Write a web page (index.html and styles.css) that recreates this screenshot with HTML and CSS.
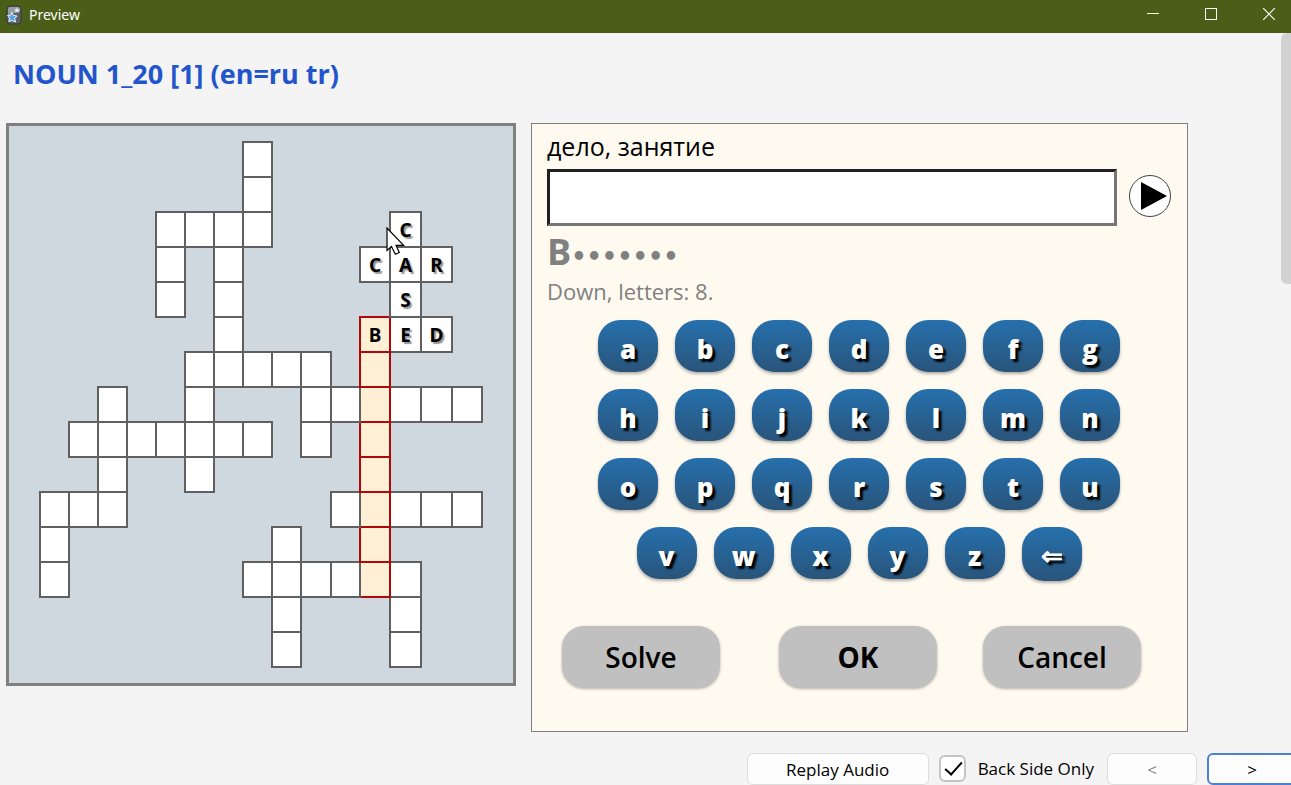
FILE: index.html
```html
<!DOCTYPE html>
<html lang="en">
<head>
    <meta charset="UTF-8">
    <meta name="viewport" content="width=device-width, initial-scale=1.0">
    <title>Preview</title>
    <link rel="stylesheet" href="styles.css">
</head>
<body>

<header class="titlebar">
    <svg class="app-icon" width="16" height="20" viewBox="0 0 16 20">
        <rect x="1" y="1" width="14" height="18" rx="3" fill="#5d6266" stroke="#33363a"/>
        <path d="M2 10 L14 6 V4 Q14 2 12 2 H4 Q2 2 2 4 Z" fill="#9a9ea2"/>
        <path d="M6 7.500 L7.600 10.500 L11 11 L8.800 13.500 L9.500 17 L6 15.500 L2.800 16.500 L3.500 13 L1.500 10.500 L4.800 10.200 Z" fill="#5ba7e6" stroke="#e6f2fc" stroke-width="1"/>
        <path d="M11 2.500 L12 4.500 L14 5 L12.500 6.500 L12.500 8 L11 7 L9 7.500 L9.500 5.500 L8.500 4 L10.300 4 Z" fill="#dfe8f0"/>
    </svg>
    <span class="window-title">Preview</span>
    <div class="window-buttons">
        <button type="button" aria-label="Minimize">
            <svg width="12" height="12" viewBox="0 0 12 12"><path d="M0 5.500 H12" stroke="#fff"/></svg>
        </button>
        <button type="button" aria-label="Maximize">
            <svg width="12" height="12" viewBox="0 0 12 12"><rect x="0.500" y="0.500" width="11" height="11" fill="none" stroke="#fff"/></svg>
        </button>
        <button type="button" aria-label="Close">
            <svg width="12" height="12" viewBox="0 0 12 12"><path d="M0 0 L12 12 M12 0 L0 12" stroke="#fff" stroke-width="1.200"/></svg>
        </button>
    </div>
</header>

<div class="page">
    <div class="scrollbar"></div>

    <h1>NOUN 1_20 [1] (en=ru tr)</h1>

    <main class="content">
        <!-- Crossword -->
        <div class="board">
            <table id="crossword">
                <colgroup>
                    <col class="narrow" span="9">
                    <col class="medium">
                    <col class="narrow">
                    <col class="medium">
                    <col class="wide" span="2">
                    <col class="medium">
                </colgroup>
                <tbody></tbody>
            </table>
            <svg class="cursor" width="20" height="30" viewBox="0 0 20 30">
                <path d="M1 1 V23.500 L5.500 19.500 L9.300 27.300 L13.300 25.500 L10 18.300 H17.600 Z" fill="#fff" stroke="#000" stroke-width="1.200"/>
            </svg>
        </div>

        <!-- Question panel -->
        <form class="panel">
            <label for="answer">дело, занятие</label>
            <div class="answer-row">
                <input type="text" id="answer" name="answer" autocomplete="off">
                <button type="button" class="play" aria-label="Play audio">
                    <svg width="42" height="42" viewBox="0 0 42 42">
                        <circle cx="21" cy="21" r="20.500" fill="#fff" stroke="#444"/>
                        <path d="M12 7 V35 L38 21 Z" fill="#000"/>
                    </svg>
                </button>
            </div>
            <p class="hint">B<span class="dots">•••••••</span></p>
            <p class="info">Down, letters: 8.</p>

            <div class="keyboard" id="keyboard"></div>

            <div class="actions">
                <button type="button">Solve</button>
                <button type="submit" class="ok">OK</button>
                <button type="button">Cancel</button>
            </div>
        </form>
    </main>

    <footer class="toolbar">
        <button type="button" class="replay">Replay Audio</button>
        <label class="back-only"><input type="checkbox" id="backOnly" checked>Back Side Only</label>
        <button type="button" class="nav" disabled>&lt;</button>
        <button type="button" class="nav next">&gt;</button>
    </footer>
</div>

<script>
    // "." is no cell, "-" is an empty cell
    const rows = [
        '.......-.......',
        '.......-.......',
        '....----....C..',
        '....-.-....CAR.',
        '....-.-.....S..',
        '......-....BED.',
        '.....-----.-...',
        '..-..-...------',
        '.-------.-.-...',
        '..-..-.....-...',
        '---.......-----',
        '-.......-..-...',
        '-......------..',
        '........-...-..',
        '........-...-..'
    ];

    // The word being answered
    const active = { col: 11, from: 5, to: 12 };

    const tbody = document.querySelector('#crossword tbody');
    rows.forEach((row, r) => {
        const tr = tbody.insertRow();
        [...row].forEach((ch, c) => {
            const td = tr.insertCell();
            if (ch === '.') return;
            td.className = 'cell';
            if (c === active.col && r >= active.from && r <= active.to) td.classList.add('active');
            if (ch !== '-') td.textContent = ch;
        });
    });

    const keyboard = document.getElementById('keyboard');
    ['abcdefg', 'hijklmn', 'opqrstu', 'vwxyz⇐'].forEach(keys => {
        const line = document.createElement('div');
        line.className = 'key-row';
        [...keys].forEach(key => {
            const button = document.createElement('button');
            button.type = 'button';
            button.className = key === '⇐' ? 'key back' : 'key';
            button.textContent = key;
            line.appendChild(button);
        });
        keyboard.appendChild(line);
    });
</script>

</body>
</html>
```
FILE: styles.css
```css
* {
    box-sizing: border-box;
}

body {
    font-family: "Open Sans", "Noto Sans", sans-serif;
    background-color: #f4f4f4;
    margin: 0;
    height: 100vh;
    overflow: hidden;
}

button, input {
    font-family: inherit;
}

button {
    cursor: pointer;
}

.titlebar {
    display: flex;
    align-items: center;
    height: 33px;
    padding: 0 0 4px 6px;
    background-color: #4a5e17;
    color: #fff;
    font-family: "Noto Sans", sans-serif;
    font-size: 14px;
}

.app-icon {
    margin-right: 7px;
}

.window-buttons {
    display: flex;
    margin-left: auto;
    margin-right: -7px;
}

.window-buttons button {
    width: 58px;
    height: 28px;
    padding: 0;
    border: none;
    background: none;
}

.page {
    position: relative;
    padding: 24px 0 0 6px;
}

.scrollbar {
    position: absolute;
    top: 0;
    right: 0;
    width: 10px;
    height: 251px;
    border-radius: 6px 0 0 6px;
    background-color: #d2d2d2;
}

h1 {
    margin: 0 0 32px 7px;
    color: #2255cc;
    font-size: 27px;
    line-height: 34px;
}

.content {
    display: flex;
    align-items: flex-start;
    gap: 15px;
    max-width: 1182px;
}

.board {
    position: relative;
    padding: 15px 30px;
    border: 3px solid #808080;
    background-color: #d0d8df;
}

#crossword {
    width: 444px;
    table-layout: fixed;
    border-collapse: collapse;
}

.narrow {
    width: 29px;
}

.medium {
    width: 30px;
}

.wide {
    width: 31px;
}

#crossword td {
    height: 35px;
    padding: 0;
    text-align: center;
    font-family: "Noto Sans", sans-serif;
    font-size: 19px;
    font-weight: bold;
    line-height: 24px;
}

#crossword .cell {
    border: 2px solid #606060;
    background-color: #fff;
    text-shadow: 2px 2px 1px #999;
}

#crossword .active {
    border-color: #b00808;
    background-color: #ffefd5;
    text-shadow: none;
}

.cursor {
    position: absolute;
    left: 377px;
    top: 101px;
}

.panel {
    flex: 1;
    height: 609px;
    padding: 6px 15px;
    border: 1px solid #808080;
    background-color: #fffaf0;
}

.panel label {
    display: block;
    font-size: 25px;
    line-height: 33px;
}

.answer-row {
    display: flex;
    align-items: center;
    gap: 12px;
    margin: 6px 1px 0 0;
}

#answer {
    flex: 1;
    min-width: 0;
    height: 57px;
    padding: 4px 8px;
    border: 3px solid;
    border-color: #202020 #767676 #767676 #202020;
    font-size: 25px;
}

.play {
    display: flex;
    margin-bottom: 4px;
    padding: 0;
    border: none;
    background: none;
}

.hint, .info {
    margin: 0;
    color: #808080;
}

.hint {
    padding: 5px 0 2px;
    font-size: 36px;
    font-weight: bold;
    line-height: 42px;
}

.dots {
    font-family: "DejaVu Sans", sans-serif;
    font-size: 24px;
    line-height: 24px;
}

.info {
    font-size: 22px;
    line-height: 32px;
}

.keyboard {
    display: flex;
    flex-direction: column;
    gap: 17px;
    margin-right: 1px;
    padding-top: 13px;
}

.key-row {
    display: flex;
    justify-content: center;
    gap: 17px;
    height: 52px;
}

.key {
    width: 60px;
    height: 52px;
    padding: 5px 0 0;
    border: none;
    border-radius: 22px;
    background: linear-gradient(#2670ad, #29547a);
    box-shadow: 0 2px 3px rgba(0, 0, 0, 0.3);
    color: #fff;
    font-size: 26px;
    font-weight: 800;
    line-height: 36px;
    text-shadow: 3px 3px 2px #000;
}

.back {
    height: 54px;
    padding-top: 2px;
}

.actions {
    display: flex;
    justify-content: flex-start;
    gap: 46px;
    padding: 47px 0 0 15px;
}

.actions button {
    width: 158px;
    height: 62px;
    padding: 0;
    border: none;
    border-radius: 22px;
    background-color: #c0c0c0;
    box-shadow: 0 1px 3px rgba(0, 0, 0, 0.3);
    color: #000;
    font-size: 28px;
    font-weight: 600;
}

.actions .ok {
    margin-left: 13px;
    font-weight: bold;
}

.toolbar {
    display: flex;
    justify-content: flex-end;
    gap: 10px;
    margin-right: -6px;
    padding-top: 21px;
    font-size: 17px;
}

.toolbar button {
    height: 32px;
    padding: 0;
    border: 1px solid #dcdcdc;
    border-radius: 6px;
    background-color: #fdfdfd;
    color: #000;
    font-size: 17px;
}

.toolbar .replay {
    width: 182px;
}

.toolbar .nav {
    width: 90px;
}

.toolbar .nav:disabled {
    color: #888;
}

.toolbar .next {
    border: 2px solid #4a80d8;
}

.back-only {
    display: flex;
    align-items: center;
    gap: 12px;
    height: 30px;
    margin-right: 3px;
}

#backOnly {
    appearance: none;
    width: 27px;
    height: 27px;
    margin: 0;
    border: 2px solid #c4c4c4;
    border-radius: 6px;
    background-color: #fff;
}

#backOnly:checked::before {
    content: "";
    display: block;
    width: 7px;
    height: 15px;
    margin: 1px 0 0 8px;
    border: solid #000;
    border-width: 0 2px 2px 0;
    transform: rotate(42deg);
}
```
